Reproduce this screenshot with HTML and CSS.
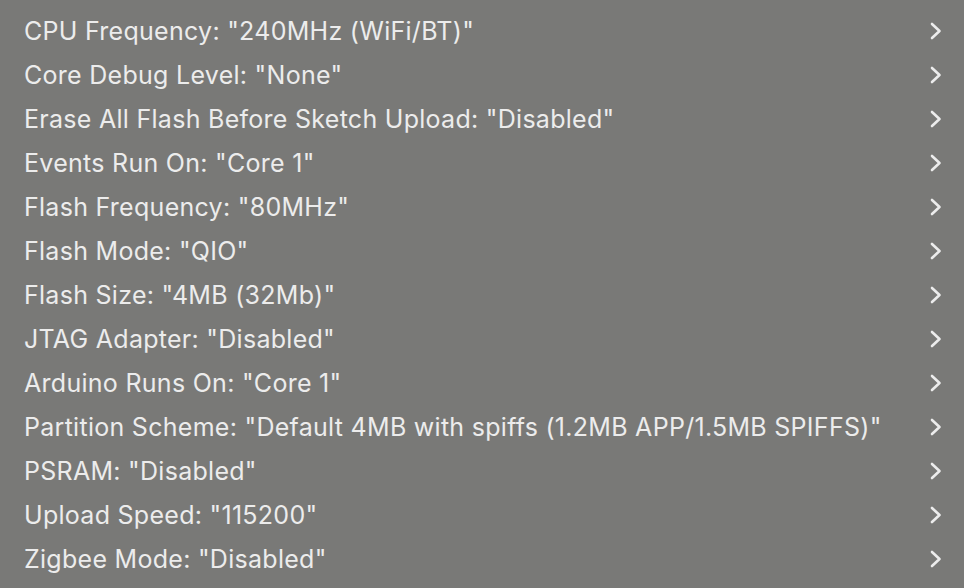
FILE: index.html
```html
<!DOCTYPE html>
<html>
<head>
	<title>Board options</title>
	<link rel="stylesheet" href="styles.css">
</head>
<body>
	<ul class="menu">
		<li class="item"><span>CPU Frequency: "240MHz (WiFi/BT)"</span><svg class="chev" viewBox="0 0 12 18"><path d="M2 2l7.5 7-7.5 7"/></svg></li>
		<li class="item"><span>Core Debug Level: "None"</span><svg class="chev" viewBox="0 0 12 18"><path d="M2 2l7.5 7-7.5 7"/></svg></li>
		<li class="item"><span>Erase All Flash Before Sketch Upload: "Disabled"</span><svg class="chev" viewBox="0 0 12 18"><path d="M2 2l7.5 7-7.5 7"/></svg></li>
		<li class="item"><span>Events Run On: "Core 1"</span><svg class="chev" viewBox="0 0 12 18"><path d="M2 2l7.5 7-7.5 7"/></svg></li>
		<li class="item"><span>Flash Frequency: "80MHz"</span><svg class="chev" viewBox="0 0 12 18"><path d="M2 2l7.5 7-7.5 7"/></svg></li>
		<li class="item"><span>Flash Mode: "QIO"</span><svg class="chev" viewBox="0 0 12 18"><path d="M2 2l7.5 7-7.5 7"/></svg></li>
		<li class="item"><span>Flash Size: "4MB (32Mb)"</span><svg class="chev" viewBox="0 0 12 18"><path d="M2 2l7.5 7-7.5 7"/></svg></li>
		<li class="item"><span>JTAG Adapter: "Disabled"</span><svg class="chev" viewBox="0 0 12 18"><path d="M2 2l7.5 7-7.5 7"/></svg></li>
		<li class="item"><span>Arduino Runs On: "Core 1"</span><svg class="chev" viewBox="0 0 12 18"><path d="M2 2l7.5 7-7.5 7"/></svg></li>
		<li class="item"><span>Partition Scheme: "Default 4MB with spiffs (1.2MB APP/1.5MB SPIFFS)"</span><svg class="chev" viewBox="0 0 12 18"><path d="M2 2l7.5 7-7.5 7"/></svg></li>
		<li class="item"><span>PSRAM: "Disabled"</span><svg class="chev" viewBox="0 0 12 18"><path d="M2 2l7.5 7-7.5 7"/></svg></li>
		<li class="item"><span>Upload Speed: "115200"</span><svg class="chev" viewBox="0 0 12 18"><path d="M2 2l7.5 7-7.5 7"/></svg></li>
		<li class="item"><span>Zigbee Mode: "Disabled"</span><svg class="chev" viewBox="0 0 12 18"><path d="M2 2l7.5 7-7.5 7"/></svg></li>
	</ul>
</body>
</html>
```

FILE: styles.css
```css
html, body{
	margin: 0;
	height: 100%;
	background-color: #797977;
}
.menu{
	list-style: none;
	margin: 0;
	padding: 9px 0 0 24px;
	font-family: Inter, "Liberation Sans", sans-serif;
	font-size: 25px;
	letter-spacing: 0.28px;
	color: #ececec;
}
.item{
	display: flex;
	align-items: center;
	justify-content: space-between;
	height: 44px;
	padding-right: 22px;
}
.item span{
	margin-top: -1px;
}
.chev{
	width: 12px;
	height: 18px;
	fill: none;
	stroke: #ececec;
	stroke-width: 2.6;
	stroke-linecap: round;
	stroke-linejoin: round;
}
```
